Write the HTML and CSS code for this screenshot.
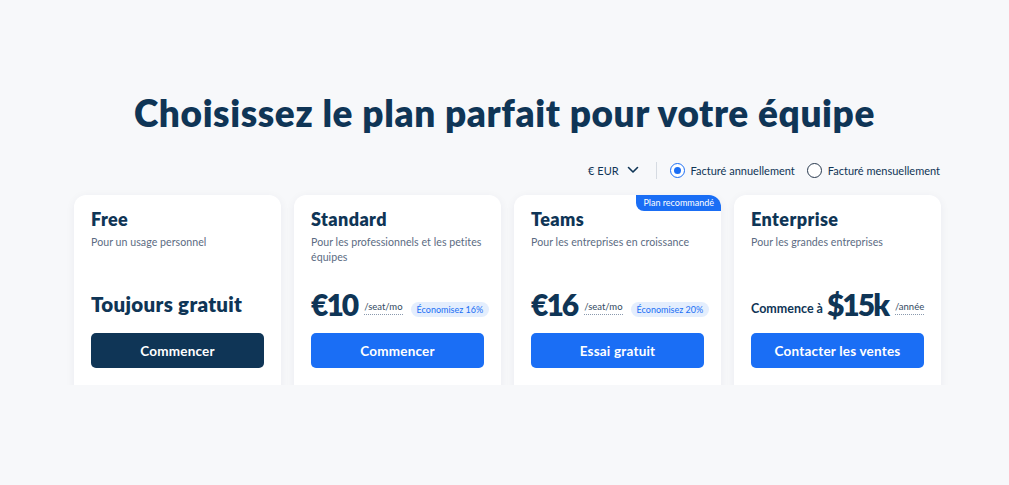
FILE: index.html
```html
<!DOCTYPE html>
<html lang="fr">
<head>
<meta charset="utf-8">
<title>Plans</title>
<link rel="stylesheet" href="styles.css">
</head>
<body>
<main class="page">
  <h1 class="title">Choisissez le plan parfait pour votre équipe</h1>
  <div class="controls">
    <div class="currency">€ EUR
      <svg class="chev" width="12" height="8" viewBox="0 0 12 8"><path d="M1.5 1.5 6 6l4.5-4.5" fill="none" stroke="#0f3556" stroke-width="1.6" stroke-linecap="round" stroke-linejoin="round"/></svg>
    </div>
    <span class="sep"></span>
    <label class="radio"><span class="dot on"></span>Facturé annuellement</label>
    <label class="radio"><span class="dot"></span>Facturé mensuellement</label>
  </div>
  <div class="clip">
    <div class="cards">
      <section class="card">
        <h3>Free</h3>
        <p class="desc">Pour un usage personnel</p>
        <div class="price"><span class="always">Toujours gratuit</span></div>
        <button class="btn dark">Commencer</button>
      </section>
      <section class="card">
        <h3>Standard</h3>
        <p class="desc">Pour les professionnels et les petites équipes</p>
        <div class="price"><span class="amount">€10</span><span class="unit">/seat/mo</span><span class="save">Économisez 16%</span></div>
        <button class="btn">Commencer</button>
      </section>
      <section class="card">
        <span class="reco">Plan recommandé</span>
        <h3>Teams</h3>
        <p class="desc">Pour les entreprises en croissance</p>
        <div class="price"><span class="amount">€16</span><span class="unit">/seat/mo</span><span class="save">Économisez 20%</span></div>
        <button class="btn">Essai gratuit</button>
      </section>
      <section class="card">
        <h3>Enterprise</h3>
        <p class="desc">Pour les grandes entreprises</p>
        <div class="price"><span class="from">Commence à</span><span class="amount">$15k</span><span class="unit">/année</span></div>
        <button class="btn">Contacter les ventes</button>
      </section>
    </div>
  </div>
</main>
</body>
</html>
```
FILE: styles.css
```css
* { box-sizing: border-box; }
html, body { margin: 0; background: #f7f8fa; }
body { font-family: Lato, "Noto Sans", sans-serif; color: #0f3556; }
.page { width: 1009px; padding-top: 91px; }
.title {
  margin: 0;
  text-align: center;
  font-size: 37px;
  line-height: 44px;
  font-weight: 800;
  color: #0f3556;
  letter-spacing: 0.6px;
}
.controls {
  display: flex;
  justify-content: flex-end;
  align-items: center;
  gap: 12px;
  height: 22px;
  margin-top: 24px;
  padding-right: 69px;
  font-size: 11px;
  color: #0f3556;
}
.currency { display: flex; align-items: center; gap: 8px; margin-right: 2px; }
.sep { width: 1px; height: 17px; background: #d6dbe2; margin: 0 1px 0 3px; }
.radio { display: flex; align-items: center; gap: 6px; }
.dot {
  width: 15px; height: 15px; border-radius: 50%;
  border: 1.4px solid #27384d; background: #fff;
  display: inline-flex; align-items: center; justify-content: center;
}
.dot.on { border-color: #1a6ef5; }
.dot.on::after { content: ""; width: 7px; height: 7px; border-radius: 50%; background: #1a6ef5; }
.clip {
  margin-top: 4px;
  padding: 10px 10px 0;
  overflow: hidden;
  width: 890px;
  margin-left: 64px;
  height: 200px;
}
.cards { display: grid; grid-template-columns: repeat(4, 207px); gap: 13px; }
.card {
  position: relative;
  background: #fff;
  border-radius: 12px;
  padding: 12px 17px 0 17px;
  height: 260px;
  box-shadow: 0 2px 10px rgba(20, 40, 80, 0.06);
  display: flex;
  flex-direction: column;
}
.card h3 { margin: 0; font-size: 18px; line-height: 24px; font-weight: 800; letter-spacing: 0.4px; }
.desc { margin: 4px 0 0; font-size: 10.6px; line-height: 15px; color: #5b6b82; min-height: 30px; letter-spacing: 0.05px; }
.price { height: 56px; display: flex; align-items: flex-end; gap: 4px; white-space: nowrap; }
.always { font-size: 20.5px; font-weight: 800; line-height: 30px; padding-bottom: 2px; letter-spacing: 0.3px; }
.amount { font-size: 30px; font-weight: 800; line-height: 34px; letter-spacing: -2px; margin-right: 3px; }
.unit {
  font-size: 9.5px; line-height: 12px; color: #334a63;
  border-bottom: 1px dotted #8a99ad; margin-bottom: 6px; padding-bottom: 1px;
}
.save {
  font-size: 9px; line-height: 15px; color: #1a6ef5; background: #e4eefd;
  border-radius: 8px; padding: 0 6px; margin-left: 4px; margin-bottom: 4px;
}
.from { font-size: 12.5px; font-weight: 700; line-height: 16px; margin-bottom: 4px; }
.btn {
  margin-top: 12px;
  height: 35px;
  border: 0;
  border-radius: 5px;
  background: #1a6ef5;
  color: #fff;
  font-family: inherit;
  font-size: 13.5px;
  font-weight: 700;
  letter-spacing: 0.2px;
  width: 100%;
}
.btn.dark { background: #0f3556; }
.reco {
  position: absolute; top: 0; right: 0;
  background: #1a6ef5; color: #fff;
  font-size: 9px; line-height: 16px;
  padding: 0 7px;
  border-radius: 0 12px 0 8px;
}
```
